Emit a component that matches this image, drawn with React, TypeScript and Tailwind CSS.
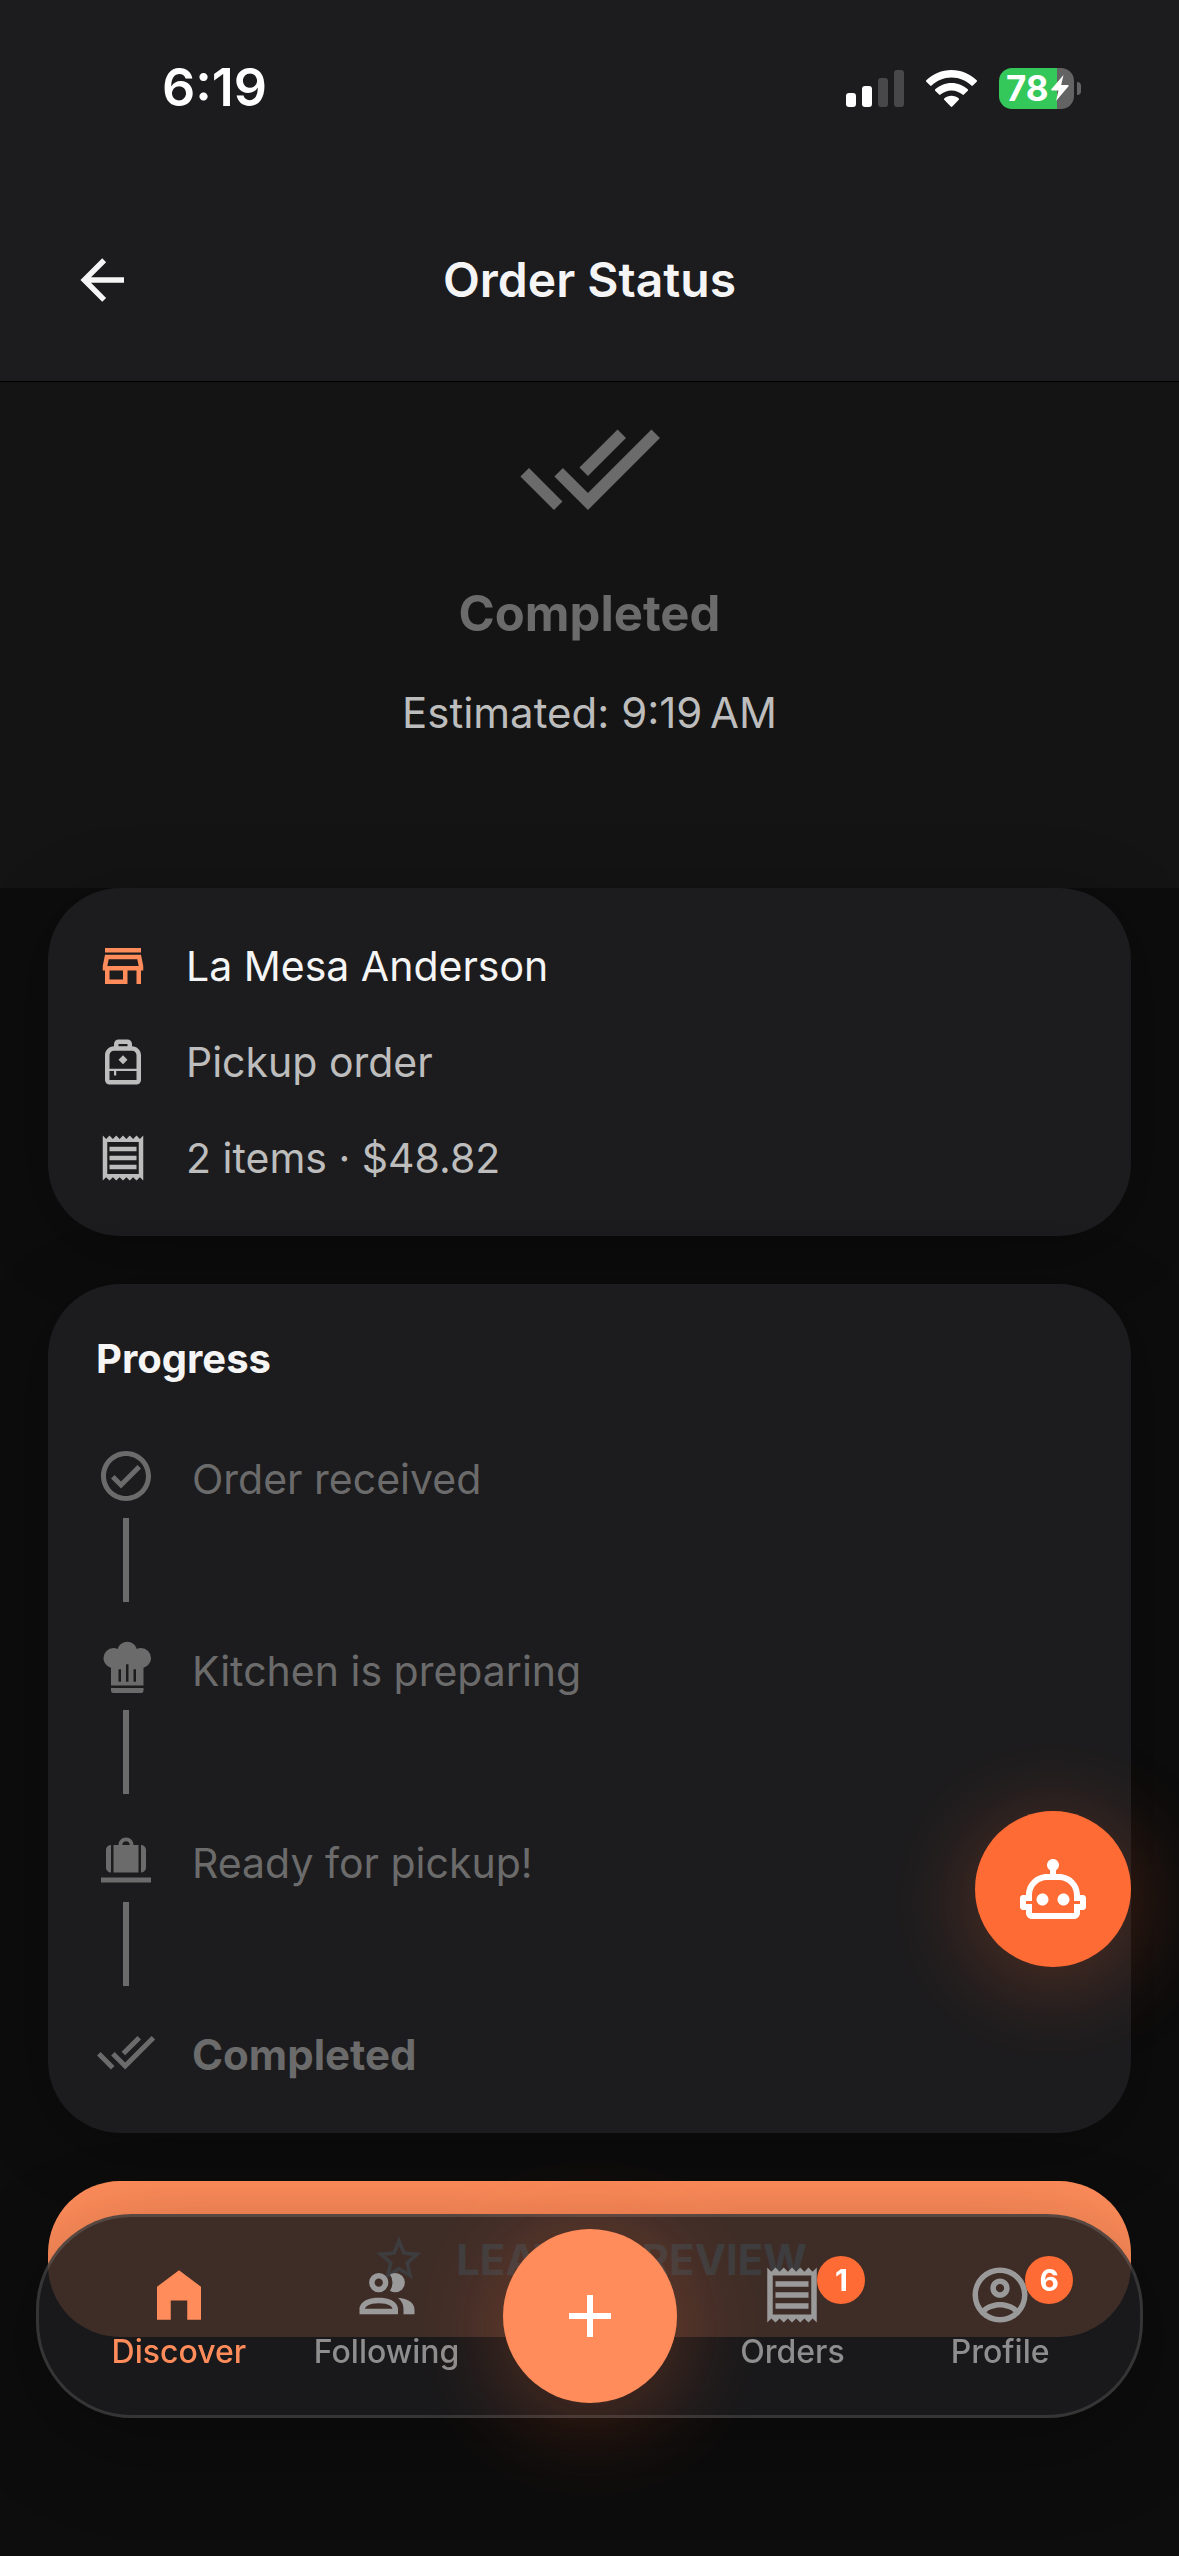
import type { ReactNode } from "react";
import {
  MdDoneAll,
  MdOutlineCheckCircle,
  MdOutlineReceipt,
  MdOutlineStore,
  MdStarOutline,
} from "react-icons/md";

interface IconProps {
  path: string;
  className?: string;
}

const Icon = ({ path, className }: IconProps) => (
  <svg viewBox="0 0 24 24" fill="currentColor" aria-hidden="true" className={className}>
    <path d={path} />
  </svg>
);

const StatusBar = () => (
  <div className="flex h-[176px] items-center justify-between pr-[98px] pl-[162px] text-white">
    <span className="text-[52px] leading-[60px] font-semibold">6:19</span>
    <div className="flex items-center gap-[22px]">
      <svg viewBox="0 0 58 37" className="h-[37px] w-[58px]" aria-hidden="true">
        <rect x="0" y="23" width="10" height="14" rx="3" fill="white" />
        <rect x="16" y="16" width="10" height="21" rx="3" fill="white" />
        <rect x="32" y="8" width="10" height="29" rx="3" fill="#48484a" />
        <rect x="48" y="0" width="10" height="37" rx="3" fill="#48484a" />
      </svg>
      {/* wifi arcs narrow down to a point */}
      <svg viewBox="0 0 51 37" className="h-[37px] w-[51px]" fill="white" aria-hidden="true">
        <path d="M25.500 0C15.800 0 7 3.900.3 10.300c-.4.400-.4 1 0 1.400l3.900 3.900c.4.400 1 .4 1.400 0C10.800 10.600 17.800 7.600 25.500 7.600s14.700 3 19.900 8c.4.400 1 .4 1.400 0l3.900-3.900c.4-.4.4-1 0-1.400C44 3.900 35.200 0 25.500 0z" />
        <path d="M25.500 12.900c-6.300 0-12 2.500-16.300 6.400-.4.400-.4 1 0 1.400l3.900 3.900c.4.400 1 .4 1.400 0 2.900-2.600 6.700-4.200 11-4.200s8.100 1.600 11 4.200c.4.400 1 .4 1.400 0l3.900-3.900c.4-.4.4-1 0-1.400-4.300-3.900-10-6.400-16.300-6.400z" />
        <path d="M25.500 25.700c-2.800 0-5.300 1-7.300 2.700-.4.400-.4 1 0 1.400l6.500 6.700c.4.500 1.200.5 1.600 0l6.500-6.700c.4-.4.4-1 0-1.400-2-1.700-4.500-2.700-7.300-2.700z" />
      </svg>
      <div className="flex items-center gap-[3px]">
        <div className="flex h-[41px] w-[75px] items-center gap-[2px] overflow-hidden rounded-[13px] bg-linear-to-r from-[#34c759] from-78% to-[#636363] to-78% pl-[7px]">
          <span className="text-[35px] leading-[41px] font-bold">78</span>
          <svg viewBox="0 0 18 26" className="h-[26px] w-[18px] shrink-0" fill="white" aria-hidden="true">
            <path d="M12.500 0 .3 14.300c-.4.500-.1 1.200.6 1.200h6.600L5 26 17.500 11.300c.4-.5.1-1.200-.6-1.200h-6.700z" />
          </svg>
        </div>
        <div className="h-[13px] w-[4px] rounded-r-full bg-[#636363]" />
      </div>
    </div>
  </div>
);

const Header = () => (
  <header className="border-b border-black bg-[#1c1c1e]">
    <StatusBar />
    <div className="grid grid-cols-[66px_1fr_66px] items-center px-[69px] pt-[71px] pb-[68px]">
      <button type="button" aria-label="Back" className="text-[#f5f5f5]">
        <Icon path={icons.arrowLeft} className="size-[66px]" />
      </button>
      <h1 className="text-center text-[48px] leading-[66px] font-semibold text-[#f5f5f5]">
        Order Status
      </h1>
    </div>
  </header>
);

const Hero = () => (
  <section className="flex flex-col items-center bg-[#141414] pt-[14px] pb-36">
    <MdDoneAll className="size-[144px] text-[#6b6b6b]" />
    <h2 className="mt-[38px] text-[49px] leading-[72px] font-bold text-[#6b6b6b]">
      Completed
    </h2>
    <p className="mt-8 text-[42px] leading-[62px] text-[#bdbdbd]">
      Estimated: 9:19{"\u202f"}AM
    </p>
  </section>
);

const Summary = () => (
  <section className="flex flex-col gap-[30px] rounded-[72px] bg-[#1c1c1e] px-12 py-[45px] text-[41px] leading-[66px] text-[#bdbdbd] shadow-[0_12px_72px_rgba(0,0,0,0.3)]">
    <div className="flex items-center gap-9">
      <MdOutlineStore className="size-[54px] text-[#ff8c5a]" />
      <span className="text-[#f5f5f5]">La Mesa Anderson</span>
    </div>
    <div className="flex items-center gap-9">
      <Icon path={icons.bagPersonal} className="size-[54px]" />
      <span>Pickup order</span>
    </div>
    <div className="flex items-center gap-9">
      <MdOutlineReceipt className="size-[54px]" />
      <span>2 items · $48.82</span>
    </div>
  </section>
);

interface Step {
  label: string;
  icon: ReactNode;
}

const Progress = () => (
  <section className="rounded-[72px] bg-[#1c1c1e] px-12 pt-12 pb-[45px] shadow-[0_12px_72px_rgba(0,0,0,0.3)]">
    <h2 className="text-[40px] leading-[54px] font-bold text-[#f5f5f5]">Progress</h2>
    <ol className="mt-[60px] text-[#6b6b6b]">
      {steps.map((step, index) => {
        const isLast = index === steps.length - 1;
        return (
          <li key={step.label} className="flex gap-9">
            <div className="flex flex-col items-center">
              {step.icon}
              {!isLast && <div className="mt-3 mb-9 h-[84px] w-[6px] bg-[#6b6b6b]" />}
            </div>
            <span
              className={
                isLast
                  ? "text-[42px] leading-[66px] font-bold"
                  : "text-[41px] leading-[66px]"
              }
            >
              {step.label}
            </span>
          </li>
        );
      })}
    </ol>
  </section>
);

interface Tab {
  label: string;
  icon: ReactNode;
  active?: boolean;
  badge?: number;
}

const TabLink = ({ tab }: { tab: Tab }) => (
  <a
    href="#"
    className={
      tab.active
        ? "flex flex-1 flex-col items-center gap-1.5 text-[#ff8c5a]"
        : "flex flex-1 flex-col items-center gap-1.5 text-[#8e8e8e]"
    }
  >
    <span className={tab.active ? "relative" : "relative text-[#9a9a9a]"}>
      {tab.icon}
      {tab.badge && (
        <span className="absolute -top-1.5 -right-10 flex size-12 items-center justify-center rounded-full bg-[#ff6b35] text-[30px] leading-9 font-bold text-white">
          {tab.badge}
        </span>
      )}
    </span>
    <span className="text-[32px] leading-9 font-medium">{tab.label}</span>
  </a>
);

const TabBar = () => (
  <nav className="fixed inset-x-9 bottom-[138px] flex h-[204px] items-center rounded-[96px] border-[3px] border-white/12 bg-[#1c1c1e]/85 px-9 shadow-[0_24px_96px_rgba(0,0,0,0.3)]">
    {tabs.slice(0, 2).map((tab) => (
      <TabLink key={tab.label} tab={tab} />
    ))}
    <button
      type="button"
      aria-label="Add"
      className="mx-3 flex size-[174px] shrink-0 items-center justify-center rounded-full bg-[#ff8c5a] text-white shadow-[0_12px_96px_rgba(255,107,53,0.3)]"
    >
      <Icon path={icons.plus} className="size-[72px]" />
    </button>
    {tabs.slice(2).map((tab) => (
      <TabLink key={tab.label} tab={tab} />
    ))}
  </nav>
);

export default function App() {
  return (
    <div className="min-h-screen bg-[#0d0d0d] font-[Inter,sans-serif]">
      <Header />
      <Hero />
      <main className="flex flex-col gap-12 px-12 pb-[219px]">
        <Summary />
        <Progress />
        <button
          type="button"
          className="flex h-[156px] items-center justify-center gap-[30px] rounded-[72px] bg-[#ff8c5a] text-[42px] font-bold text-[#f5f5f5]"
        >
          <MdStarOutline className="size-[54px]" />
          LEAVE A REVIEW
        </button>
      </main>
      <button
        type="button"
        aria-label="Open assistant"
        className="fixed right-12 bottom-[589px] flex size-[156px] items-center justify-center rounded-full bg-[#ff6b35] text-white shadow-[0_12px_96px_rgba(255,107,53,0.3)]"
      >
        <Icon path={icons.robot} className="size-[72px]" />
      </button>
      <TabBar />
    </div>
  );
}

const icons = {
  arrowLeft: "M20,11V13H8L13.5,18.5L12.08,19.92L4.16,12L12.08,4.08L13.5,5.5L8,11H20Z",
  plus: "M19,13H13V19H11V13H5V11H11V5H13V11H19V13Z",
  home: "M12,3L20,9V21H15V14H9V21H4V9L12,3Z",
  bagPersonal:
    "M16 5V4C16 2.9 15.11 2 14 2H10C8.9 2 8 2.9 8 4V5C5.79 5 4 6.79 4 9V20C4 21.1 4.9 22 6 22H18C19.11 22 20 21.1 20 20V9C20 6.79 18.21 5 16 5M10 4H14V5H10V4M12 9L14 11L12 13L10 11L12 9M18 20H6V16H8V18H9V16H18V20M18 15H6V9C6 7.9 6.9 7 8 7H16C17.11 7 18 7.9 18 9V15Z",
  chefHat:
    "M12.5,1.5C10.73,1.5 9.17,2.67 8.67,4.37C8.14,4.13 7.58,4 7,4A4,4 0 0,0 3,8C3,9.82 4.24,11.41 6,11.87V19H19V11.87C20.76,11.41 22,9.82 22,8A4,4 0 0,0 18,4C17.42,4 16.86,4.13 16.33,4.37C15.83,2.67 14.27,1.5 12.5,1.5M12,10.5H13V17.5H12V10.5M9,12.5H10V17.5H9V12.5M15,12.5H16V17.5H15V12.5M6,20V21A1,1 0 0,0 7,22H18A1,1 0 0,0 19,21V20H6Z",
  bagChecked:
    "M2 19H22V21H2V19M6 6V17C4.900 17 4 16.100 4 15V8C4 6.900 4.900 6 6 6M18 6C19.100 6 20 6.900 20 8V15C20 16.100 19.100 17 18 17V6M9 6C9 4.300 10.300 3 12 3S15 4.300 15 6H17V17H7V6H9M10.500 6H13.500C13.500 5.100 12.900 4.500 12 4.500S10.500 5.100 10.500 6Z",
  robot:
    "M17.5 15.5C17.5 16.61 16.61 17.5 15.5 17.5S13.5 16.61 13.5 15.5 14.4 13.5 15.5 13.5 17.5 14.4 17.5 15.5M8.5 13.5C7.4 13.5 6.5 14.4 6.5 15.5S7.4 17.5 8.5 17.5 10.5 16.61 10.5 15.5 9.61 13.5 8.5 13.5M23 15V18C23 18.55 22.55 19 22 19H21V20C21 21.11 20.11 22 19 22H5C3.9 22 3 21.11 3 20V19H2C1.45 19 1 18.55 1 18V15C1 14.45 1.45 14 2 14H3C3 10.13 6.13 7 10 7H11V5.73C10.4 5.39 10 4.74 10 4C10 2.9 10.9 2 12 2S14 2.9 14 4C14 4.74 13.6 5.39 13 5.73V7H14C17.87 7 21 10.13 21 14H22C22.55 14 23 14.45 23 15M21 16H19V14C19 11.24 16.76 9 14 9H10C7.24 9 5 11.24 5 14V16H3V17H5V20H19V17H21V16Z",
  people:
    "M13.07 10.41A5 5 0 0 0 13.07 4.59A3.39 3.39 0 0 1 15 4A3.5 3.5 0 0 1 15 11A3.39 3.39 0 0 1 13.07 10.41M5.5 7.5A3.5 3.5 0 1 1 9 11A3.5 3.5 0 0 1 5.5 7.5M7.5 7.5A1.5 1.5 0 1 0 9 6A1.5 1.5 0 0 0 7.5 7.5M16 17V19H2V17S2 13 9 13 16 17 16 17M14 17C13.86 16.22 12.67 15 9 15S4.07 16.31 4 17M15.95 13A5.32 5.32 0 0 1 18 17V19H22V17S22 13.37 15.94 13Z",
  account:
    "M12,2A10,10 0 0,0 2,12A10,10 0 0,0 12,22A10,10 0 0,0 22,12A10,10 0 0,0 12,2M7.07,18.28C7.5,17.38 10.12,16.5 12,16.5C13.88,16.5 16.5,17.38 16.93,18.28C15.57,19.36 13.86,20 12,20C10.14,20 8.43,19.36 7.07,18.28M18.36,16.83C16.93,15.09 13.46,14.5 12,14.5C10.54,14.5 7.07,15.09 5.64,16.83C4.62,15.5 4,13.82 4,12C4,7.59 7.59,4 12,4C16.41,4 20,7.59 20,12C20,13.82 19.38,15.5 18.36,16.83M12,6C10.06,6 8.5,7.56 8.5,9.5C8.5,11.44 10.06,13 12,13C13.94,13 15.5,11.44 15.5,9.5C15.5,7.56 13.94,6 12,6M12,11A1.5,1.5 0 0,1 10.5,9.5A1.5,1.5 0 0,1 12,8A1.5,1.5 0 0,1 13.5,9.5A1.5,1.5 0 0,1 12,11Z",
};

const steps: Step[] = [
  { label: "Order received", icon: <MdOutlineCheckCircle className="size-[60px]" /> },
  {
    label: "Kitchen is preparing",
    icon: <Icon path={icons.chefHat} className="size-[60px]" />,
  },
  {
    label: "Ready for pickup!",
    icon: <Icon path={icons.bagChecked} className="size-[60px]" />,
  },
  { label: "Completed", icon: <MdDoneAll className="size-[60px]" /> },
];

const tabs: Tab[] = [
  {
    label: "Discover",
    icon: <Icon path={icons.home} className="size-[66px]" />,
    active: true,
  },
  { label: "Following", icon: <Icon path={icons.people} className="size-[66px]" /> },
  { label: "Orders", icon: <MdOutlineReceipt className="size-[66px]" />, badge: 1 },
  {
    label: "Profile",
    icon: <Icon path={icons.account} className="size-[66px]" />,
    badge: 6,
  },
];
